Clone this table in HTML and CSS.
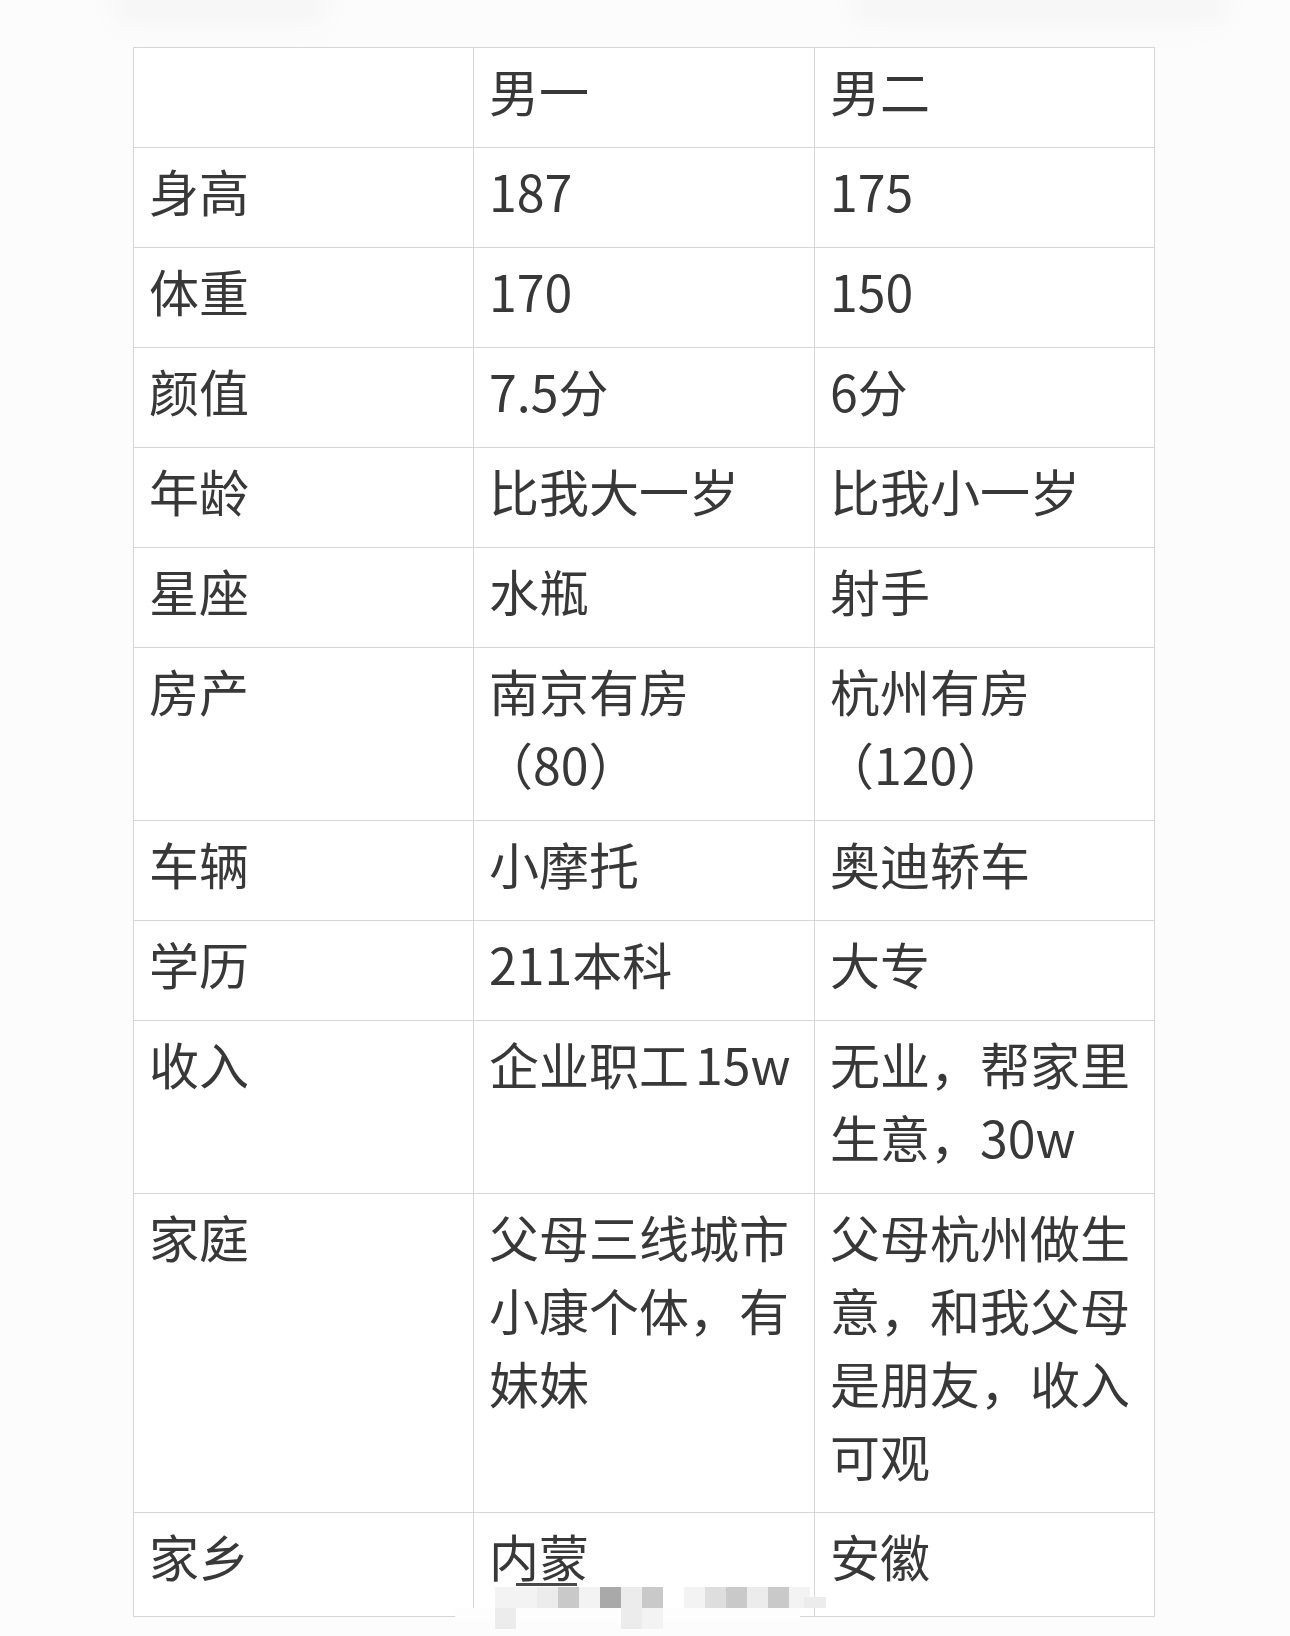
FILE: index.html
```html
<!DOCTYPE html>
<html lang="zh-CN">
<head>
<meta charset="utf-8">
<title>对比</title>
<link rel="stylesheet" href="styles.css">
</head>
<body>
<div class="page">
  <div class="haze haze-left"></div>
  <div class="haze haze-right"></div>
  <table class="cmp">
    <colgroup><col class="c1"><col class="c2"><col class="c3"></colgroup>
    <tr><td></td><td>男一</td><td>男二</td></tr>
    <tr><td>身高</td><td>187</td><td>175</td></tr>
    <tr><td>体重</td><td>170</td><td>150</td></tr>
    <tr><td>颜值</td><td>7.5分</td><td>6分</td></tr>
    <tr><td>年龄</td><td>比我大一岁</td><td>比我小一岁</td></tr>
    <tr><td>星座</td><td>水瓶</td><td>射手</td></tr>
    <tr><td>房产</td><td>南京有房<span class="paren">（80）</span></td><td>杭州有房<span class="paren">（120）</span></td></tr>
    <tr><td>车辆</td><td>小摩托</td><td>奥迪轿车</td></tr>
    <tr><td>学历</td><td>211本科</td><td>大专</td></tr>
    <tr><td>收入</td><td>企业职工<span class="gap">15w</span></td><td>无业，帮家里生意，30w</td></tr>
    <tr><td>家庭</td><td>父母三线城市小康个体，有妹妹</td><td>父母杭州做生意，和我父母是朋友，收入可观</td></tr>
    <tr class="last"><td>家乡</td><td>内蒙</td><td>安徽</td></tr>
  </table>
  <div class="mask"></div>
  <div class="uline"></div>
  <div class="mosaic">
    <i class="s1"></i><i class="s1"></i><i class="s2"></i><i class="s4"></i><i class="s1"></i><i class="s5"></i><i class="s2"></i><i class="s4"></i><i class="s0"></i><i class="s1"></i><i class="s3"></i><i class="s4"></i><i class="s2"></i><i class="s4"></i><i class="s1"></i><i class="s0"></i>
    <i class="s2"></i><i class="s0"></i><i class="s0"></i><i class="s0"></i><i class="s0"></i><i class="s0"></i><i class="s2"></i><i class="s1"></i><i class="s0"></i><i class="s0"></i><i class="s0"></i><i class="s0"></i><i class="s0"></i><i class="s0"></i><i class="s0"></i><i class="s0"></i>
  </div>
  <div class="tail"></div>
</div>
</body>
</html>
```

FILE: styles.css
```css
html, body {
  margin: 0;
  padding: 0;
  background: #fcfcfc;
}

.page {
  position: relative;
  width: 1290px;
  height: 1636px;
  padding-top: 47px;
  box-sizing: border-box;
  overflow: hidden;
}

.cmp {
  margin-left: 133px;
  width: 1021px;
  table-layout: fixed;
  border-collapse: collapse;
  background: #ffffff;
  font-family: "Noto Sans CJK SC", "Noto Sans", sans-serif;
  font-size: 50px;
  line-height: 73px;
  color: #383838;
}

.c1 { width: 340px; }
.c2 { width: 341px; }
.c3 { width: 340px; }

.cmp td {
  border: 1px solid #d6d6d6;
  padding: 6px 12px 20px 15px;
  vertical-align: top;
  word-break: normal;
}

.cmp tr.last td {
  padding-bottom: 24px;
}

.paren {
  margin-left: -6px;
}

.gap {
  margin-left: 6px;
}

.haze {
  position: absolute;
  top: -14px;
  height: 40px;
  background: #f1f1f1;
  filter: blur(12px);
  border-radius: 20px;
  opacity: 0.5;
}
.haze-left { left: 110px; width: 220px; }
.haze-right { left: 850px; width: 380px; }

.mask {
  position: absolute;
  left: 455px;
  top: 1608px;
  width: 345px;
  height: 14px;
  background: #fdfdfd;
}

.uline {
  position: absolute;
  left: 516px;
  top: 1583px;
  width: 61px;
  height: 3px;
  background: #4a4a4a;
}

.mosaic {
  position: absolute;
  left: 495px;
  top: 1587px;
  display: grid;
  grid-template-columns: repeat(16, 21px);
  grid-template-rows: 21px 21px;
}
.mosaic i { display: block; }
.s0 { background: transparent; }
.s1 { background: #f3f3f3; }
.s2 { background: #ececec; }
.s3 { background: #dedede; }
.s4 { background: #c9c9c9; }
.s5 { background: #a9a9a9; }

.tail {
  position: absolute;
  left: 804px;
  top: 1597px;
  width: 22px;
  height: 11px;
  background: #ececec;
}
```
